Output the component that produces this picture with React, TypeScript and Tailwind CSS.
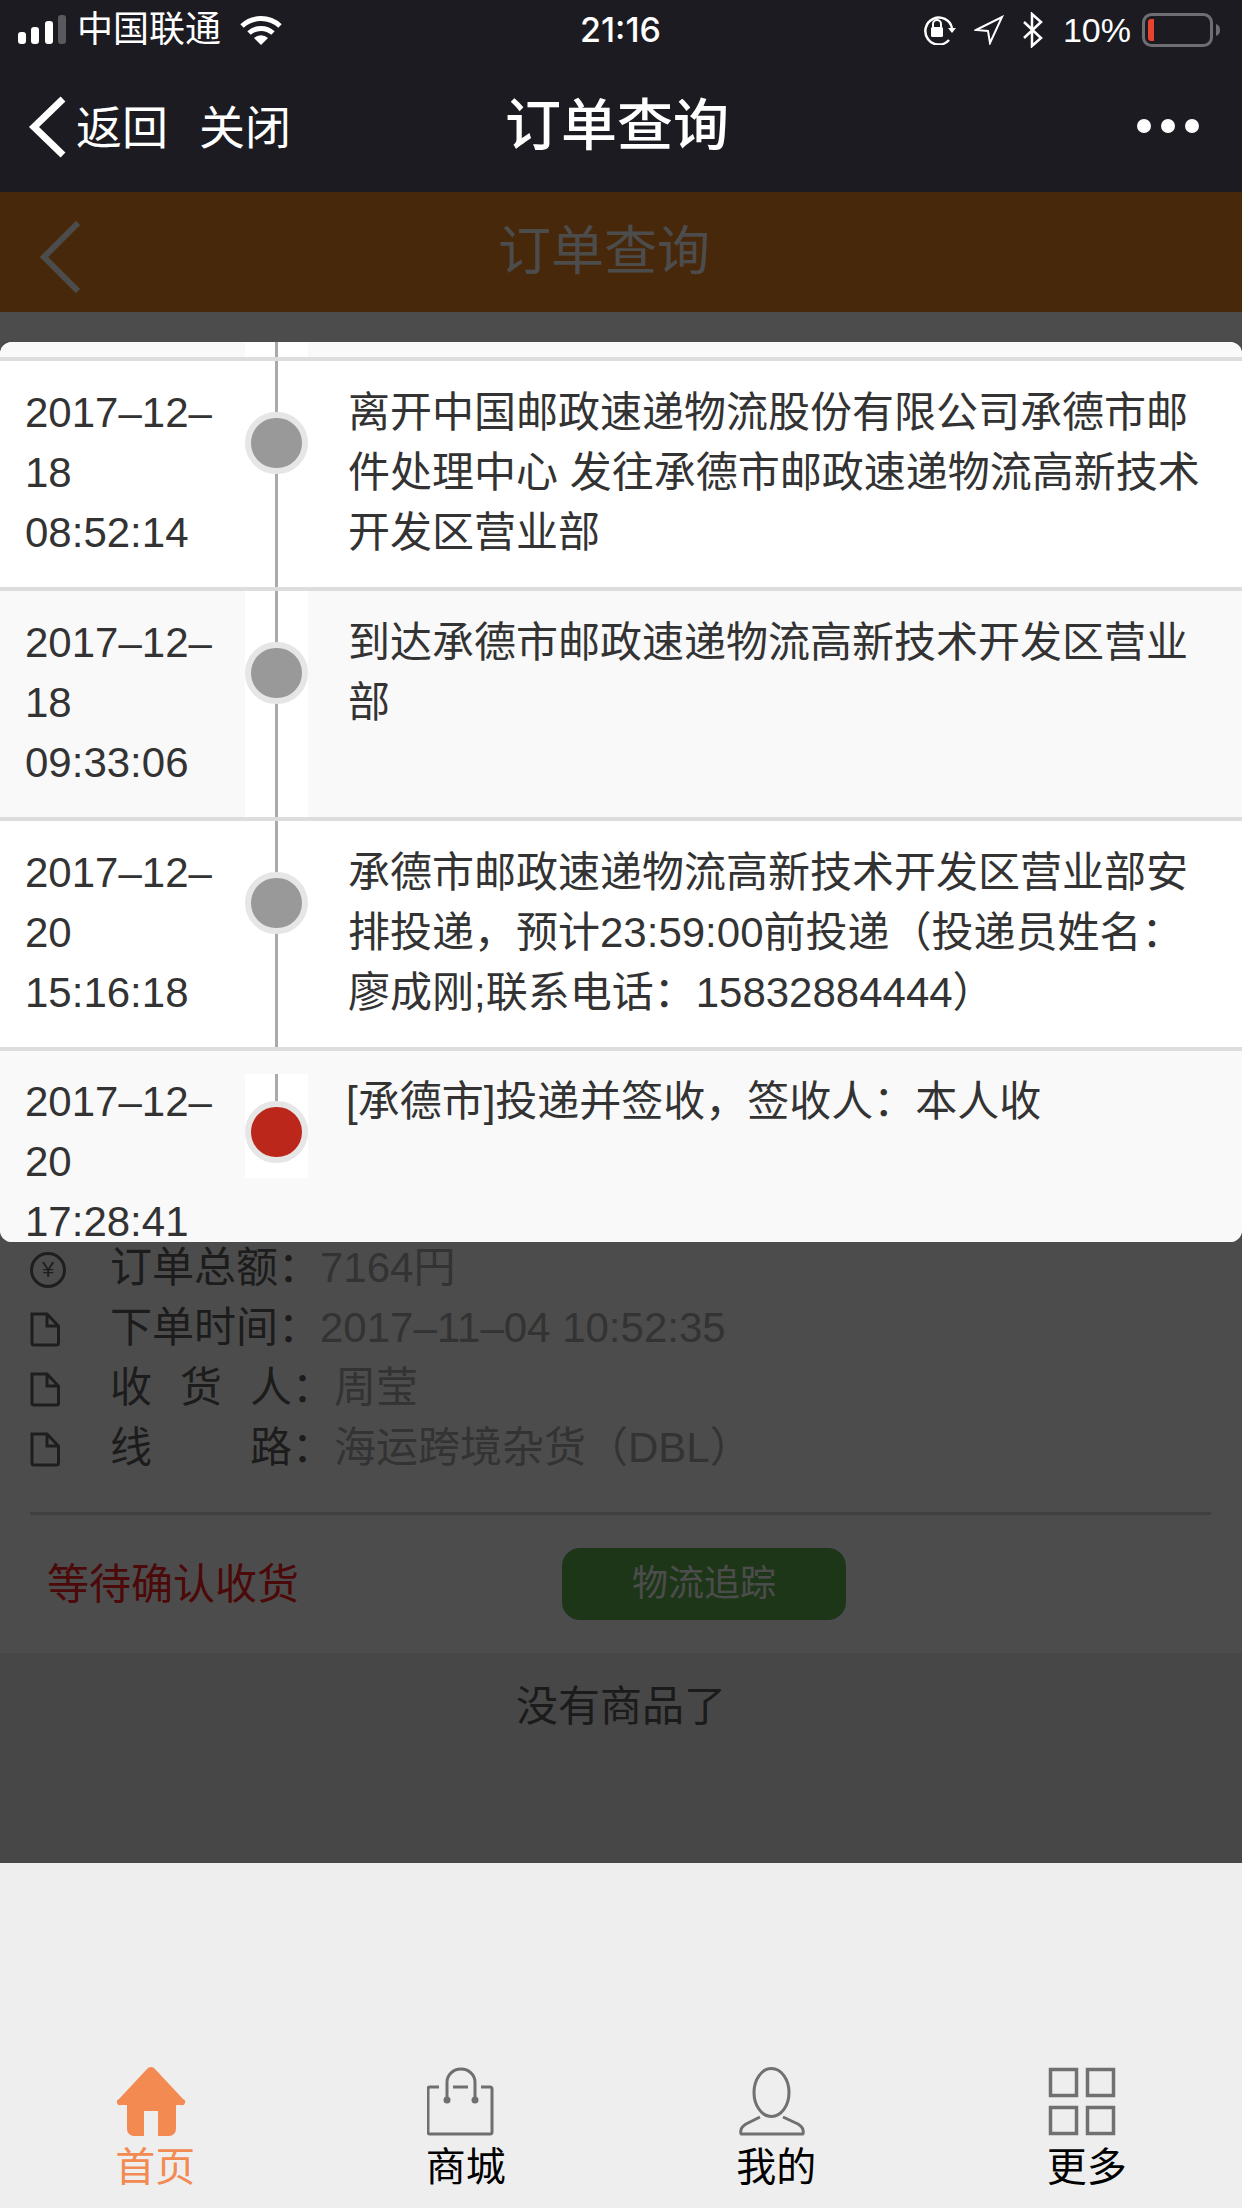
import React from 'react';

const steps = [
  {
    time: '2017–12–18 08:52:14',
    text: '离开中国邮政速递物流股份有限公司承德市邮件处理中心 发往承德市邮政速递物流高新技术开发区营业部',
  },
  {
    time: '2017–12–18 09:33:06',
    text: '到达承德市邮政速递物流高新技术开发区营业部',
  },
  {
    time: '2017–12–20 15:16:18',
    text: '承德市邮政速递物流高新技术开发区营业部安排投递，预计23:59:00前投递（投递员姓名：廖成刚;联系电话：15832884444）',
  },
];

const StatusBar = () => (
  <div className="flex h-[60px] items-center text-white">
    <svg className="ml-[18px] mt-[-1px]" width="48" height="30" viewBox="0 0 48 30">
      <rect x="0" y="17" width="8" height="12" rx="3" fill="#fff" />
      <rect x="13" y="12" width="8" height="17" rx="3" fill="#fff" />
      <rect x="27" y="6" width="8" height="23" rx="3" fill="#fff" />
      <rect x="40" y="0" width="8" height="29" rx="3" fill="#5a5a5e" />
    </svg>
    <span className="ml-[11px] text-[36px] leading-[60px]">中国联通</span>
    <svg className="ml-[19px] mt-[1px]" width="42" height="29" viewBox="0 0 42 29">
      <path d="M2 10 A28 28 0 0 1 40 10" fill="none" stroke="#fff" strokeWidth="5" />
      <path d="M9 17 A18 18 0 0 1 33 17" fill="none" stroke="#fff" strokeWidth="5" />
      <path d="M21 29 L14 22 A10 10 0 0 1 28 22 Z" fill="#fff" />
    </svg>
    <span className="ml-[298px] font-['Inter',sans-serif] text-[34px] font-medium leading-[60px]">21:16</span>
    <svg className="ml-[261px]" width="34" height="30" viewBox="0 0 34 30">
      <path d="M27 25 A13.5 13.5 0 1 1 30 13" fill="none" stroke="#fff" strokeWidth="2.5" />
      <path d="M26 13 H34 L30 18 Z" fill="#fff" />
      <rect x="9" y="12" width="12" height="10" rx="1.5" fill="#fff" />
      <path d="M11 12 V9 a4 4 0 0 1 8 0 V12" fill="none" stroke="#fff" strokeWidth="2" />
    </svg>
    <svg className="ml-[18px]" width="30" height="30" viewBox="0 0 30 30">
      <path d="M2 15 L28 2 L16 28 L14 16 Z" fill="none" stroke="#fff" strokeWidth="2" strokeLinejoin="miter" />
    </svg>
    <svg className="ml-[18px]" width="22" height="36" viewBox="0 0 22 36">
      <path d="M2 10 L19 26 L10 34 V2 L19 10 L2 26" fill="none" stroke="#fff" strokeWidth="2.5" />
    </svg>
    <span className="ml-[19px] text-[34px] leading-[60px]">10%</span>
    <svg className="ml-[11px]" width="79" height="34" viewBox="0 0 79 34">
      <rect x="1.5" y="1.5" width="68" height="31" rx="8" fill="none" stroke="#6e6e72" strokeWidth="3" />
      <path d="M6 9 a3 3 0 0 1 3 -3 h3 v22 h-3 a3 3 0 0 1 -3 -3 Z" fill="#e8432e" />
      <path d="M74 11 C77 12 78 14 78 17 C78 20 77 22 74 23 Z" fill="#6e6e72" />
    </svg>
  </div>
);

const NavBar = () => (
  <div className="flex h-[132px] items-center text-white">
    <svg className="ml-[28px] mt-[2px]" width="40" height="62" viewBox="0 0 40 62">
      <path d="M35 3 L6 31 L35 59" fill="none" stroke="#fff" strokeWidth="7" />
    </svg>
    <span className="ml-[8px] mt-[4px] text-[46px] leading-[60px]">返回</span>
    <span className="ml-[31px] mt-[4px] text-[46px] leading-[60px]">关闭</span>
    <span className="ml-[214px] text-[56px] font-medium leading-[70px]">订单查询</span>
    <div className="ml-auto mr-[43px] flex gap-[10px]">
      <span className="h-[14px] w-[14px] rounded-full bg-white" />
      <span className="h-[14px] w-[14px] rounded-full bg-white" />
      <span className="h-[14px] w-[14px] rounded-full bg-white" />
    </div>
  </div>
);

const DocIcon = () => (
  <svg className="mt-[5px]" width="30" height="35" viewBox="0 0 30 35">
    <path d="M2 2 H17 L28.5 14 V31 a2 2 0 0 1 -2 2 H4 a2 2 0 0 1 -2 -2 Z M17 2 V14 H28.5" fill="none" stroke="#666" strokeWidth="3" />
  </svg>
);

const InfoRow = ({
  icon,
  label,
  value,
  wide,
}: {
  icon: React.ReactNode;
  label: string[];
  value: string;
  wide?: boolean;
}) => (
  <div className="flex h-[60px] items-center pl-[30px] text-[42px]">
    <div className="w-[80px]">{icon}</div>
    <div className={`flex justify-between text-[#606060] ${wide ? 'w-[182px]' : 'w-[168px]'}`}>
      {label.map((s) => (
        <span key={s}>{s}</span>
      ))}
    </div>
    <span className="text-[#606060]">：</span>
    <span className="text-[#aaaaaa]">{value}</span>
  </div>
);

const TimelineDot = ({ red }: { red?: boolean }) => (
  <div
    className={`h-[62px] w-[63px] rounded-full border-[6px] border-[#e6e6e6] ${red ? 'bg-[#bb281b]' : 'bg-[#999999]'}`}
  />
);

const StepRow = ({ time, text, shaded }: { time: string; text: string; shaded: boolean }) => (
  <div className={`flex h-[230px] border-b-4 border-[#dddddd] ${shaded ? 'bg-[#f9f9f9]' : 'bg-white'}`}>
    <div className="w-[245px] pl-[25px] pr-[25px] pt-[22px]">{time}</div>
    <div className="relative w-[63px] bg-white">
      <div className="absolute bottom-0 left-[30px] top-0 w-[3px] bg-[#aaaaaa]" />
      <div className="absolute left-0 top-[51px]">
        <TimelineDot />
      </div>
    </div>
    <div className="flex-1 pl-[40px] pr-[34px] pt-[22px]">{text}</div>
  </div>
);

const TrackingModal = () => (
  <div className="absolute left-0 right-0 top-[342px] h-[900px] overflow-hidden rounded-[12px] bg-white text-[42px] leading-[60px] text-[#333333]">
    {/* tail of the previous step, scrolled away */}
    <div className="flex h-[19px] border-b-4 border-[#dddddd] bg-[#f9f9f9]">
      <div className="w-[245px]" />
      <div className="relative w-[63px] bg-white">
        <div className="absolute bottom-0 left-[30px] top-0 w-[3px] bg-[#aaaaaa]" />
      </div>
    </div>
    {steps.map((s, i) => (
      <StepRow key={s.time} time={s.time} text={s.text} shaded={i % 2 === 1} />
    ))}
    <div className="flex h-[300px] bg-[#f9f9f9]">
      <div className="w-[245px] pl-[25px] pr-[25px] pt-[21px]">2017–12–20 17:28:41</div>
      <div className="relative mt-[23px] h-[104px] w-[63px] bg-white">
        <div className="absolute left-[30px] top-0 h-[28px] w-[3px] bg-[#aaaaaa]" />
        <div className="absolute left-0 top-[27px]">
          <TimelineDot red />
        </div>
      </div>
      <div className="flex-1 pl-[38px] pr-[34px] pt-[21px]">[承德市]投递并签收，签收人：本人收</div>
    </div>
  </div>
);

const TabBar = () => (
  <div className="mt-auto grid grid-cols-4 pb-[16px] text-[40px] leading-[50px] text-black">
    <div className="flex flex-col items-center text-[#f38a52]">
      <svg className="mr-[8px]" width="69" height="69" viewBox="0 0 69 69">
        <path
          d="M30 2 a5 5 0 0 1 8 0 L66 32 a3 3 0 0 1 -2 6 H59 V62 a7 7 0 0 1 -7 7 H41 V44 H27 V69 H17 a7 7 0 0 1 -7 -7 V38 H4 a3 3 0 0 1 -2 -6 Z"
          fill="#f38a52"
        />
      </svg>
      <span className="mt-[6px]">首页</span>
    </div>
    <div className="flex flex-col items-center">
      <svg className="mr-[8px]" width="69" height="69" viewBox="0 0 69 69">
        <path d="M12 20 H3 a2 2 0 0 0 -2 2 V65 a2 2 0 0 0 2 2 H63 a2 2 0 0 0 2 -2 V22 a2 2 0 0 0 -2 -2 H54" fill="none" stroke="#6f6f6f" strokeWidth="3" />
        <path d="M20 33 V15 a14 13 0 0 1 28 0 V33" fill="none" stroke="#6f6f6f" strokeWidth="3" />
        <path d="M26 20 H41" fill="none" stroke="#6f6f6f" strokeWidth="3" />
        <circle cx="20" cy="33" r="3.5" fill="#6f6f6f" />
        <circle cx="48" cy="33" r="3.5" fill="#6f6f6f" />
      </svg>
      <span className="mt-[6px]">商城</span>
    </div>
    <div className="flex flex-col items-center">
      <svg className="mr-[8px]" width="69" height="69" viewBox="0 0 69 69">
        <ellipse cx="33.5" cy="25.5" rx="17.5" ry="24" fill="none" stroke="#707070" strokeWidth="3" />
        <path d="M22 50 L8 57 C3 60 2 63 3 67 H65 C66 63 65 60 60 57 L45 50" fill="none" stroke="#707070" strokeWidth="3" strokeLinejoin="round" />
      </svg>
      <span className="mt-[6px]">我的</span>
    </div>
    <div className="flex flex-col items-center">
      <svg className="mr-[8px]" width="69" height="69" viewBox="0 0 69 69">
        <rect x="2.5" y="2.5" width="26" height="26" fill="none" stroke="#707070" strokeWidth="3.5" />
        <rect x="39.5" y="2.5" width="26" height="26" fill="none" stroke="#707070" strokeWidth="3.5" />
        <rect x="2.5" y="40.5" width="26" height="26" fill="none" stroke="#707070" strokeWidth="3.5" />
        <rect x="39.5" y="40.5" width="26" height="26" fill="none" stroke="#707070" strokeWidth="3.5" />
      </svg>
      <span className="mt-[6px]">更多</span>
    </div>
  </div>
);

export default function App() {
  return (
    <div
      lang="zh-CN"
      className="relative flex h-[2208px] w-[1242px] flex-col overflow-hidden bg-[#eeeeee] font-['Liberation_Sans','Noto_Sans_CJK_SC',sans-serif]"
    >
      <div className="bg-[#1b1b21]">
        <StatusBar />
        <NavBar />
      </div>

      <div className="flex h-[120px] items-center bg-[#ed8525] text-white">
        <svg className="ml-[38px] mt-[9px]" width="44" height="72" viewBox="0 0 44 72">
          <path d="M40 2 L6 36 L40 70" fill="none" stroke="#fff" strokeWidth="6" />
        </svg>
        <div className="flex-1 pr-[116px] text-center text-[53px]">订单查询</div>
      </div>

      <div className="bg-white pt-[925px]">
        <InfoRow
          icon={
            <div className="mt-[5px] flex h-[36px] w-[36px] items-center justify-center rounded-full border-[3px] border-[#666666] text-[22px] leading-none text-[#666666]">
              ¥
            </div>
          }
          label={['订单总额']}
          value="7164円"
        />
        <InfoRow icon={<DocIcon />} label={['下单时间']} value="2017–11–04 10:52:35" />
        <InfoRow icon={<DocIcon />} label={['收', '货', '人']} value="周莹" wide />
        <InfoRow icon={<DocIcon />} label={['线', '路']} value="海运跨境杂货（DBL）" wide />
        <div className="ml-[30px] mr-[31px] mt-[35px] h-[3px] bg-[#d4d4d4]" />
        <div className="flex h-[138px] items-center">
          <div className="w-[562px] pl-[47px] text-[42px] text-[#ff2020]">等待确认收货</div>
          <div className="flex h-[72px] w-[284px] items-center justify-center rounded-[18px] bg-[#61b450] text-[36px] text-white">
            物流追踪
          </div>
        </div>
      </div>

      <div className="h-[210px] bg-[#ededed] pt-[24px] text-center text-[42px] leading-[60px] text-[#5a5a5a]">
        没有商品了
      </div>

      <TabBar />

      {/* dimmed backdrop + modal */}
      <div className="absolute left-0 right-0 top-[192px] h-[1671px] bg-black/70" />
      <TrackingModal />
    </div>
  );
}
